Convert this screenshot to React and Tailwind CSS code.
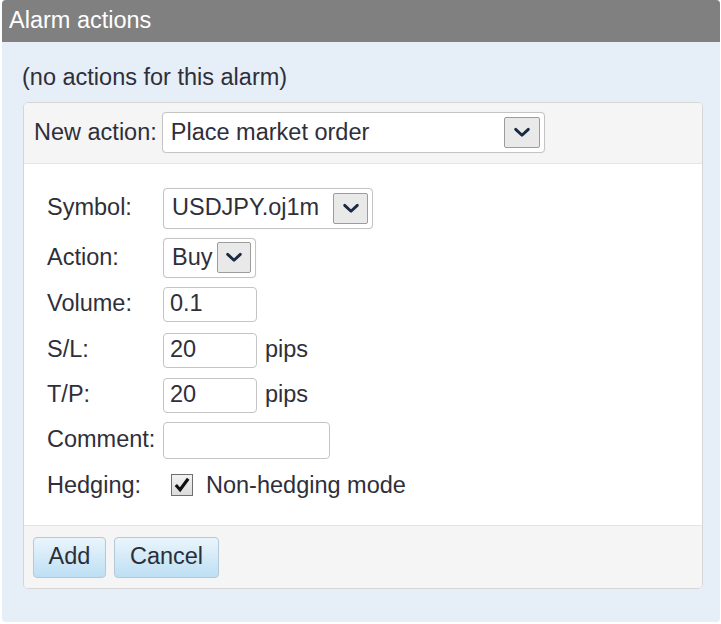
import React, { useState } from 'react';

const Chevron = () => (
  <svg viewBox="0 0 20 12" className="w-[18px] h-[11px]">
    <path d="M3 2.5 L10 9 L17 2.5" fill="none" stroke="#1b2a44" strokeWidth="3.2" strokeLinecap="round" strokeLinejoin="round" />
  </svg>
);

const SelectBox = ({ value, width, height = 'h-[41px]', arrowW = 'w-[35px]', arrowH = 'h-[31px]' }) => (
  <div className={`flex items-center justify-between bg-white border border-[#c4c4c4] rounded-[4px] shadow-[0_0_1px_#ddd] pl-[8px] pr-[4px] ${width} ${height}`}>
    <span className="text-[#2f2f3a] whitespace-nowrap">{value}</span>
    <span className={`flex items-center justify-center bg-[#e9e9e9] border border-[#9c9c9c] rounded-[2px] ${arrowW} ${arrowH}`}>
      <Chevron />
    </span>
  </div>
);

const TextBox = ({ value, width }) => (
  <div className={`flex items-center bg-white border border-[#c4c4c4] rounded-[4px] h-[35px] pl-[6px] ${width}`}>
    <span className="text-[#2f2f3a]">{value}</span>
  </div>
);

const Row = ({ label, children, className = '' }) => (
  <div className={`flex items-center ${className}`}>
    <span className="w-[116px] shrink-0 text-[#2f2f3a]">{label}</span>
    {children}
  </div>
);

export default function App() {
  const [hedging, setHedging] = useState(true);

  return (
    <div className="w-[721px] h-[624px] bg-white pl-[2px] pr-[1px] font-['Liberation_Sans',Arial,sans-serif] text-[23.5px] leading-none">
      <div className="h-[622px] bg-[#e6eef8] rounded-[4px] overflow-hidden flex flex-col">
        {/* title bar */}
        <div className="h-[42px] bg-[#808080] flex items-center pl-[7px] text-white shrink-0">
          Alarm actions
        </div>

        <div className="pl-[20px] pt-[24px] text-[#2f2f3a]">(no actions for this alarm)</div>

        {/* action box */}
        <div className="ml-[21px] mr-[17px] mt-[12px] border border-[#d6d6d6] rounded-[5px] overflow-hidden bg-white">
          <div className="h-[61px] bg-[#f5f5f5] border-b border-[#e4e4e4] flex items-center pl-[10px]">
            <span className="text-[#2f2f3a] mr-[5px]">New action:</span>
            <SelectBox value="Place market order" width="w-[383px]" arrowW="w-[36px]" />
          </div>

          <div className="pl-[23px] pt-[24px] pb-[28px] flex flex-col">
            <Row label="Symbol:">
              <SelectBox value="USDJPY.oj1m" width="w-[210px]" />
            </Row>
            <Row label="Action:" className="mt-[9px]">
              <SelectBox value="Buy" width="w-[93px]" height="h-[40px]" arrowW="w-[34px]" />
            </Row>
            <Row label="Volume:" className="mt-[9px]">
              <TextBox value="0.1" width="w-[94px]" />
            </Row>
            <Row label="S/L:" className="mt-[11px]">
              <TextBox value="20" width="w-[94px]" />
              <span className="ml-[8px] text-[#2f2f3a]">pips</span>
            </Row>
            <Row label="T/P:" className="mt-[10px]">
              <TextBox value="20" width="w-[94px]" />
              <span className="ml-[8px] text-[#2f2f3a]">pips</span>
            </Row>
            <Row label="Comment:" className="mt-[9px]">
              <div className="bg-white border border-[#c4c4c4] rounded-[4px] h-[37px] w-[167px]" />
            </Row>
            <Row label="Hedging:" className="mt-[15px]">
              <button
                onClick={() => setHedging(!hedging)}
                className="ml-[8px] w-[22px] h-[22px] border border-[#6f6f6f] bg-gradient-to-b from-[#f2f2f2] to-[#dcdcdc] flex items-center justify-center"
              >
                {hedging && (
                  <svg viewBox="0 0 16 16" className="w-[18px] h-[18px]">
                    <path d="M2.5 8 L6.3 12.2 L13.5 2.5" fill="none" stroke="#111" strokeWidth="2.8" />
                  </svg>
                )}
              </button>
              <span className="ml-[13px] text-[#2f2f3a]">Non-hedging mode</span>
            </Row>
          </div>

          <div className="h-[63px] bg-[#f5f5f5] border-t border-[#e4e4e4] flex items-center pl-[9px] gap-[8px]">
            <button className="h-[41px] w-[73px] rounded-[4px] border border-[#b4c8d6] bg-gradient-to-b from-[#eaf5fc] to-[#bddff3] text-[#2a2f3a]">
              Add
            </button>
            <button className="h-[41px] w-[105px] rounded-[4px] border border-[#b4c8d6] bg-gradient-to-b from-[#eaf5fc] to-[#bddff3] text-[#2a2f3a]">
              Cancel
            </button>
          </div>
        </div>
      </div>
    </div>
  );
}
